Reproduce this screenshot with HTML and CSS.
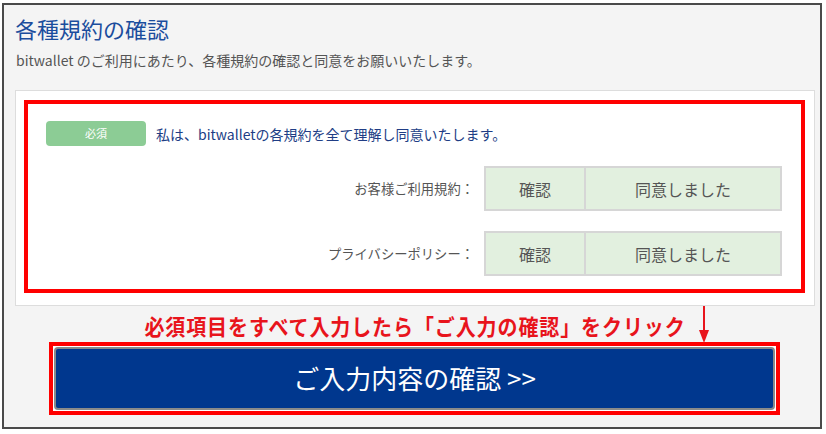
FILE: index.html
```html
<!DOCTYPE html>
<html lang="ja">
<head>
<meta charset="utf-8">
<link rel="stylesheet" href="styles.css">
</head>
<body>
<div class="frame">
  <h1 class="title">各種規約の確認</h1>
  <p class="lead">bitwallet のご利用にあたり、各種規約の確認と同意をお願いいたします。</p>
  <div class="card">
    <div class="redbox">
      <div class="agree">
        <span class="badge">必須</span>
        <span class="statement">私は、bitwalletの各規約を全て理解し同意いたします。</span>
      </div>
      <div class="row">
        <span class="label">お客様ご利用規約：</span>
        <div class="btns">
          <span class="cell confirm">確認</span>
          <span class="cell agreed">同意しました</span>
        </div>
      </div>
      <div class="row">
        <span class="label">プライバシーポリシー：</span>
        <div class="btns">
          <span class="cell confirm">確認</span>
          <span class="cell agreed">同意しました</span>
        </div>
      </div>
    </div>
  </div>
  <div class="note">
    <span class="note-text">必須項目をすべて入力したら「ご入力の確認」をクリック</span>
    <svg class="arrow" width="14" height="38" viewBox="0 0 14 38">
      <line x1="7" y1="0" x2="7" y2="30" stroke="#e8141c" stroke-width="2"/>
      <polygon points="2,24 12,24 7,37" fill="#e8141c"/>
    </svg>
  </div>
  <div class="submit-frame">
    <div class="submit">ご入力内容の確認 &gt;&gt;</div>
  </div>
</div>
</body>
</html>
```

FILE: styles.css
```css
* { box-sizing: border-box; }
html, body { margin: 0; padding: 0; background: #ffffff; }
body {
  font-family: "Noto Sans CJK JP", "Noto Sans", sans-serif;
  width: 826px;
  height: 434px;
  overflow: hidden;
}
.frame {
  margin: 3px 0 0 2px;
  width: 820px;
  height: 426px;
  border: 2px solid #4a4a4a;
  background: #f4f4f4;
  padding: 0 6px 0 11px;
}
.title {
  margin: 0;
  padding-top: 8px;
  font-size: 22px;
  line-height: 30px;
  font-weight: 400;
  color: #1b4d9d;
}
.lead {
  margin: 7px 0 0 1px;
  font-size: 14px;
  line-height: 20px;
  color: #555555;
}
.card {
  margin-top: 20px;
  width: 800px;
  height: 216px;
  background: #ffffff;
  border: 1px solid #dddddd;
  padding: 9px 9px 12px 8px;
}
.redbox {
  height: 193px;
  border: 4px solid #ff0000;
  padding: 17px 19px 13px 18px;
}
.agree {
  display: flex;
  align-items: center;
  height: 25px;
}
.badge {
  width: 100px;
  height: 25px;
  border-radius: 4px;
  background: #8ccc95;
  color: #ffffff;
  font-size: 11px;
  line-height: 25px;
  text-align: center;
}
.statement {
  margin-left: 10px;
  font-size: 14px;
  color: #203d85;
}
.row {
  margin-top: 20px;
  display: flex;
  justify-content: flex-end;
  align-items: center;
  height: 45px;
}
.label {
  margin-right: 10px;
  font-size: 13.3px;
  color: #555555;
}
.btns {
  display: flex;
  width: 298px;
  height: 45px;
  border: 2px solid #d6d6d6;
  background: #e2f0df;
}
.cell {
  display: flex;
  align-items: center;
  justify-content: center;
  font-size: 16px;
  color: #555555;
}
.confirm { width: 98px; }
.agreed { flex: 1; border-left: 2px solid #d6d6d6; }
.note {
  position: relative;
  height: 36px;
  padding-top: 3px;
  text-align: center;
  width: 800px;
}
.note-text {
  display: inline-block;
  font-size: 20px;
  line-height: 33px;
  font-weight: 700;
  color: #e8141c;
  letter-spacing: 0.9px;
  transform: scaleY(1.1);
}
.arrow {
  position: absolute;
  left: 682px;
  top: 0;
}
.submit-frame {
  margin-left: 34px;
  width: 731px;
  height: 73px;
  border: 4px solid #ff0000;
  background: #ffffff;
  padding: 1px;
}
.submit {
  height: 100%;
  border: 2px solid #8a8a8a;
  border-radius: 4px;
  background: #00378e;
  color: #ffffff;
  font-size: 26px;
  display: flex;
  align-items: center;
  justify-content: center;
  padding-bottom: 2px;
}
```
